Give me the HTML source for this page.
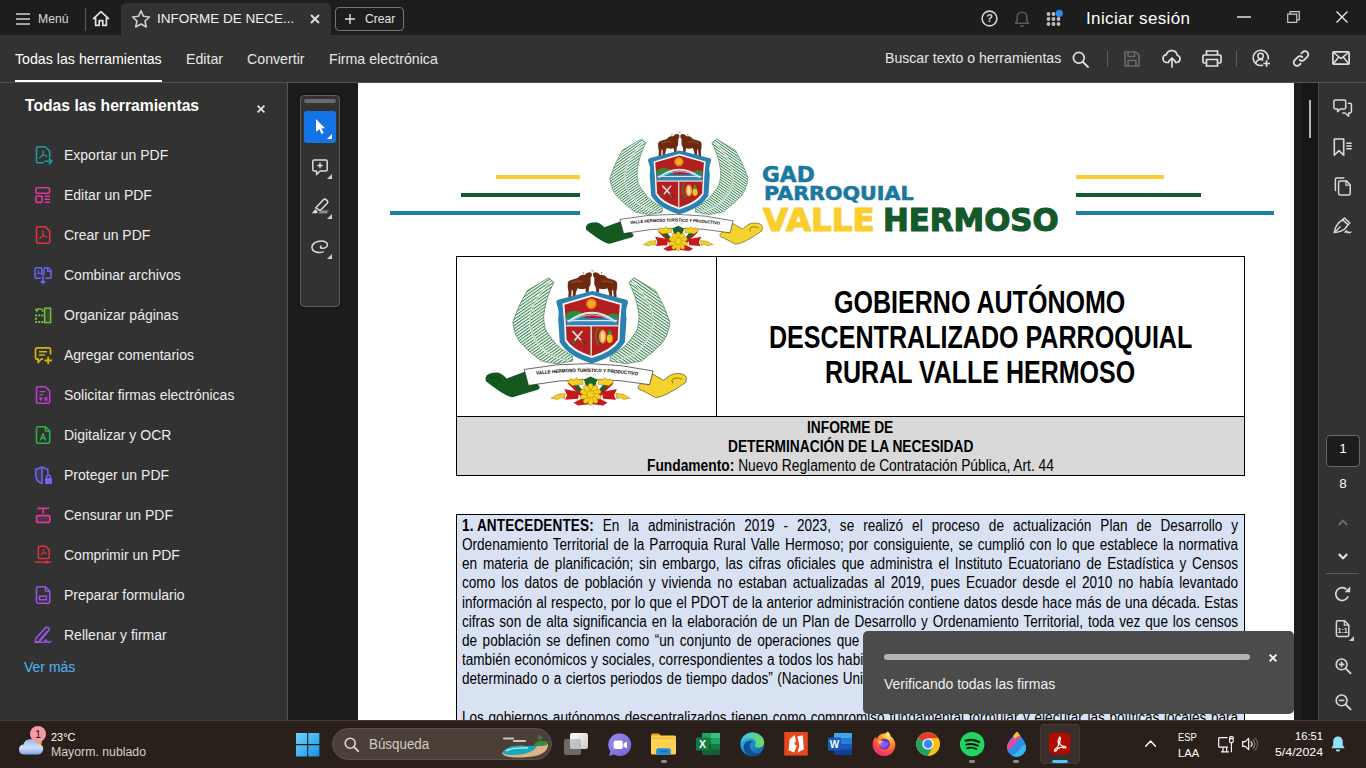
<!DOCTYPE html><html lang="es"><head>
<meta charset="utf-8">
<title>INFORME DE NECESIDAD</title>
<style>
*{box-sizing:border-box;margin:0;padding:0}
html,body{width:1366px;height:768px;overflow:hidden;background:#1d1d1d;font-family:"Liberation Sans",sans-serif;color:#e8e8e8}
.abs{position:absolute}
#titlebar{position:absolute;left:0;top:0;width:1366px;height:35px;background:#1d1d1d}
#tab{position:absolute;left:121px;top:3px;width:210px;height:32px;background:#323232;border-radius:5px 5px 0 0}
#toolbar{position:absolute;left:0;top:35px;width:1366px;height:48px;background:#323232;border-bottom:1px solid #525252}
#leftpanel{position:absolute;left:0;top:83px;width:288px;height:637px;background:#323232;border-right:1px solid #555}
#gutter{position:absolute;left:288px;top:83px;width:71px;height:637px;background:linear-gradient(90deg,#1c1c1c 0,#1c1c1c 70.400px,#fff 70.400px)}
#page{position:absolute;left:359px;top:83px;width:935px;height:637px;background:#fff;overflow:hidden;color:#000}
#scroll{position:absolute;left:1294px;top:83px;width:24px;height:637px;background:linear-gradient(90deg,#585858 0,#585858 0.3px,#1e1e1e 0.3px,#1e1e1e 7px,#171717 7px)}
#rail{position:absolute;left:1318px;top:83px;width:48px;height:637px;background:#323232;box-shadow:inset 1px 0 0 #4c4c4c}
#taskbar{position:absolute;left:0;top:720px;width:1366px;height:48px;background:#29201b;box-shadow:inset 0 1px 0 #453c37}
.t{position:absolute;white-space:nowrap;line-height:1}
svg{position:absolute;overflow:visible}
.jl{font-size:16px;color:#000;text-align:justify;text-align-last:justify;white-space:normal;transform-origin:0 0;transform:scaleX(0.848);height:16px;overflow:visible}

</style>
</head>
<body>
<div id="titlebar">
  <div id="tab"></div>
  <svg style="left:16px;top:13px" width="14" height="12" viewBox="0 0 14 12"><path d="M0 1h14M0 6h14M0 11h14" stroke="#d2d2d2" stroke-width="1.7" fill="none"></path></svg>
  <div class="t" id="menu" style="left:38px;top:12.7px;font-size:12.2px;color:#d8d8d8">Menú</div>
  <div class="abs" style="left:85px;top:8px;width:1px;height:23px;background:#5a5a5a"></div>
  <svg style="left:92px;top:10px" width="18" height="17" viewBox="0 0 18 17"><path d="M1.5 8.6 L9 1.6 L16.5 8.6 M3.6 7.4 V15.4 H7.2 V10.6 H10.8 V15.4 H14.4 V7.4" stroke="#e0e0e0" stroke-width="1.7" fill="none" stroke-linejoin="round" stroke-linecap="round"></path></svg>
  <svg style="left:131px;top:9px" width="20" height="20" viewBox="0 0 20 20"><path d="M10 1.8 L12.5 7.3 L18.5 8 L14 12.1 L15.3 18 L10 15 L4.7 18 L6 12.1 L1.5 8 L7.5 7.3 Z" stroke="#cfcfcf" stroke-width="1.6" fill="none" stroke-linejoin="round"></path></svg>
  <div class="t" id="tabtxt" style="left:157px;top:12.3px;font-size:13.5px;color:#f0f0f0">INFORME DE NECE...</div>
  <svg style="left:310px;top:14px" width="10" height="10" viewBox="0 0 10 10"><path d="M1 1L9 9M9 1L1 9" stroke="#dcdcdc" stroke-width="2" fill="none"></path></svg>
  <div class="abs" style="left:335px;top:7px;width:69px;height:24px;border:1px solid #757575;border-radius:4px"></div>
  <svg style="left:345px;top:14px" width="10" height="10" viewBox="0 0 10 10"><path d="M5 0V10M0 5H10" stroke="#e0e0e0" stroke-width="1.4" fill="none"></path></svg>
  <div class="t" id="crear" style="left:365px;top:12.9px;font-size:12.1px;color:#e4e4e4">Crear</div>
  <!-- help -->
  <svg style="left:981px;top:10px" width="17" height="17" viewBox="0 0 17 17"><circle cx="8.5" cy="8.5" r="7.4" stroke="#d4d4d4" stroke-width="1.6" fill="none"></circle><text x="8.5" y="12.4" text-anchor="middle" font-family="Liberation Sans,sans-serif" font-weight="bold" font-size="11" fill="#d4d4d4">?</text></svg>
  <!-- bell -->
  <svg style="left:1013px;top:10px" width="18" height="18" viewBox="0 0 18 18"><path d="M9 2.2c-3 0-4.8 2.2-4.8 5v3.2L2.6 13.2h12.8L13.8 10.4V7.2c0-2.800-1.800-5-4.800-5z" stroke="#5a5a5a" stroke-width="1.6" fill="none" stroke-linejoin="round"></path><path d="M7 15.200a2 2 0 0 0 4 0z" fill="#5a5a5a"></path></svg>
  <!-- apps -->
  <svg style="left:1046px;top:11px" width="16" height="16" viewBox="0 0 16 16"><g fill="#bdbdbd"><circle cx="2.500" cy="3" r="1.900"></circle><circle cx="7.500" cy="3" r="1.900"></circle><circle cx="2.500" cy="8" r="1.900"></circle><circle cx="7.500" cy="8" r="1.900"></circle><circle cx="12.500" cy="8" r="1.900"></circle><circle cx="2.500" cy="13" r="1.900"></circle><circle cx="7.500" cy="13" r="1.900"></circle><circle cx="12.500" cy="13" r="1.900"></circle></g><circle cx="13.300" cy="2.300" r="3.600" fill="#2d8cf0"></circle></svg>
  <div class="t" id="login" style="left:1086px;top:9.7px;font-size:17px;color:#ffffff;letter-spacing:0.37px">Iniciar sesión</div>
  <svg style="left:1237px;top:16px" width="14" height="2" viewBox="0 0 14 2"><path d="M0 1H14" stroke="#f0f0f0" stroke-width="1.400"></path></svg>
  <svg style="left:1287px;top:11px" width="13" height="12" viewBox="0 0 13 12"><path d="M0.700 3.200h9.100v8.100H0.700z M3 3V0.700h9.300v8.100H10" stroke="#c8c8c8" stroke-width="1.200" fill="none"></path></svg>
  <svg style="left:1336px;top:11px" width="12" height="12" viewBox="0 0 12 12"><path d="M0.500 0.500L11.500 11.500M11.500 0.500L0.500 11.500" stroke="#f0f0f0" stroke-width="1.300"></path></svg>
</div>
<div id="toolbar">
  <div class="t" id="tb1" style="left:15px;top:16.8px;font-size:14.2px;color:#ffffff">Todas las herramientas</div>
  <div class="abs" style="left:15px;top:45px;width:147px;height:2px;background:#ffffff"></div>
  <div class="t" id="tb2" style="left:186px;top:16.8px;font-size:14.2px;color:#e6e6e6">Editar</div>
  <div class="t" id="tb3" style="left:247px;top:16.8px;font-size:14.2px;color:#e6e6e6">Convertir</div>
  <div class="t" id="tb4" style="left:329px;top:16.8px;font-size:14.2px;color:#e6e6e6">Firma electrónica</div>
  <div class="t" id="tb5" style="left:885px;top:15.9px;font-size:14.1px;color:#e6e6e6">Buscar texto o herramientas</div>
  <svg style="left:1072px;top:16px" width="17" height="17" viewBox="0 0 17 17"><circle cx="6.800" cy="6.800" r="5.400" stroke="#e0e0e0" stroke-width="1.700" fill="none"></circle><path d="M10.800 10.800L16 16" stroke="#e0e0e0" stroke-width="1.900" stroke-linecap="round"></path></svg>
  <div class="abs" style="left:1107px;top:16px;width:1px;height:16px;background:#5c5c5c"></div>
  <!-- save -->
  <svg style="left:1124px;top:16px" width="16" height="16" viewBox="0 0 16 16"><path d="M1 1h11l3 3v11H1z" stroke="#6b6b6b" stroke-width="1.600" fill="none" stroke-linejoin="round"></path><path d="M4 1.500v4h6.500v-4M4 15v-5.500h8V15" stroke="#6b6b6b" stroke-width="1.500" fill="none"></path></svg>
  <!-- cloud upload -->
  <svg style="left:1162px;top:14px" width="20" height="19" viewBox="0 0 20 19"><path d="M6.500 13.500H5a4 4 0 0 1-.600-7.950A5.600 5.600 0 0 1 15.300 6.300 3.700 3.700 0 0 1 15 13.500h-1.500" stroke="#e0e0e0" stroke-width="1.700" fill="none" stroke-linecap="round" stroke-linejoin="round"></path><path d="M10 18V9.500M6.700 12.300L10 9l3.300 3.300" stroke="#e0e0e0" stroke-width="1.700" fill="none" stroke-linecap="round" stroke-linejoin="round"></path></svg>
  <!-- print -->
  <svg style="left:1202px;top:15px" width="20" height="17" viewBox="0 0 20 17"><path d="M4.500 5V1h11v4" stroke="#e0e0e0" stroke-width="1.700" fill="none"></path><path d="M4.500 13H2.300a1.300 1.300 0 0 1-1.300-1.300V6.300A1.300 1.300 0 0 1 2.300 5h15.400A1.300 1.300 0 0 1 19 6.300v5.400a1.300 1.300 0 0 1-1.300 1.300H15.500" stroke="#e0e0e0" stroke-width="1.700" fill="none"></path><path d="M4.500 9.500h11V16h-11z" stroke="#e0e0e0" stroke-width="1.700" fill="none"></path></svg>
  <div class="abs" style="left:1236px;top:16px;width:1px;height:16px;background:#5c5c5c"></div>
  <!-- person plus -->
  <svg style="left:1252px;top:14px" width="19" height="19" viewBox="0 0 19 19"><path d="M10.500 16.200A7.600 7.600 0 1 1 16.200 10" stroke="#e0e0e0" stroke-width="1.600" fill="none" stroke-linecap="round"></path><circle cx="8.600" cy="7" r="2.700" stroke="#e0e0e0" stroke-width="1.500" fill="none"></circle><path d="M3.800 14.300c.8-2.600 2.600-3.800 4.800-3.800 1 0 1.900.2 2.700.8" stroke="#e0e0e0" stroke-width="1.500" fill="none"></path><path d="M14.600 11.200v6.600M11.300 14.500h6.600" stroke="#e0e0e0" stroke-width="1.700" fill="none"></path></svg>
  <!-- link -->
  <svg style="left:1292px;top:15px" width="18" height="17" viewBox="0 0 18 17"><g stroke="#e0e0e0" stroke-width="1.800" fill="none" stroke-linecap="round"><path d="M7.600 9.800a3.300 3.300 0 0 0 4.700 0l3-3a3.300 3.300 0 0 0-4.700-4.700l-1.200 1.200"></path><path d="M10.400 7.200a3.300 3.300 0 0 0-4.700 0l-3 3a3.300 3.300 0 0 0 4.700 4.700l1.200-1.200"></path></g></svg>
  <!-- mail -->
  <svg style="left:1332px;top:16px" width="18" height="14" viewBox="0 0 18 14"><rect x="0.900" y="0.900" width="16.200" height="12.200" rx="1" stroke="#e0e0e0" stroke-width="1.700" fill="none"></rect><path d="M1.500 1.500L9 7.600 16.500 1.500M1.500 12.500L6.800 6M16.500 12.500L11.200 6" stroke="#e0e0e0" stroke-width="1.500" fill="none"></path></svg>
</div>
<div id="leftpanel">
  <div class="t" id="lptitle" style="left:25px;top:15px;font-size:15.700px;font-weight:bold;color:#ffffff">Todas las herramientas</div>
  <svg style="left:257px;top:22px" width="8" height="8" viewBox="0 0 8 8"><path d="M.6.600l6.800 6.800M7.400.600L.6 7.400" stroke="#e4e4e4" stroke-width="1.700"></path></svg>
  <svg style="left:34px;top:63px" width="18" height="18" viewBox="0 0 18 18"><path d="M9 16.800H4a1.500 1.500 0 0 1-1.500-1.500V2.300A1.500 1.500 0 0 1 4 .8h7.200L15.700 5.300V10.800" stroke="#1f9c9c" stroke-width="1.600" fill="none" stroke-linejoin="round" stroke-linecap="round"></path><path d="M9 4.3V8.7M9 8.7L5.6 11.7M9 8.7L12.8 10.1" stroke="#1f9c9c" stroke-width="1.3" fill="none" stroke-linecap="round"></path><path d="M10.800 15.200h6.600M15.200 12.600l2.700 2.600-2.700 2.600" stroke="#1f9c9c" stroke-width="1.600" fill="none" stroke-linecap="round" stroke-linejoin="round"></path></svg>
  <div class="t" id="li0" style="left:64px;top:65.15px;font-size:14px;color:#ececec">Exportar un PDF</div>
  <svg style="left:34px;top:103px" width="18" height="18" viewBox="0 0 18 18"><rect x="1.900" y="1.800" width="13.600" height="5.400" rx="1.200" stroke="#e0389a" stroke-width="1.600" fill="none"></rect><rect x="1.900" y="10" width="6.200" height="6.400" rx="1" stroke="#e0389a" stroke-width="1.600" fill="none"></rect><path d="M10.600 10.200h5.500M10.600 13.200h5.500M10.600 16.300h5.500" stroke="#e0389a" stroke-width="1.500"></path></svg>
  <div class="t" id="li1" style="left:64px;top:105.15px;font-size:14px;color:#ececec">Editar un PDF</div>
  <svg style="left:34px;top:143px" width="18" height="18" viewBox="0 0 18 18"><path d="M4.0 0.8H11.399999999999999L15.7 5.1V15.7a1.5 1.5 0 0 1-1.5 1.5H4.0a1.5 1.5 0 0 1-1.5-1.5V2.3a1.5 1.5 0 0 1 1.5-1.5z" stroke="#e0343f" stroke-width="1.6" fill="none" stroke-linejoin="round"></path><path d="M9 4.999999999999999V9.399999999999999M9 9.399999999999999L5.6 12.399999999999999M9 9.399999999999999L12.8 10.799999999999999" stroke="#e0343f" stroke-width="1.3" fill="none" stroke-linecap="round"></path></svg>
  <div class="t" id="li2" style="left:64px;top:145.15px;font-size:14px;color:#ececec">Crear un PDF</div>
  <svg style="left:34px;top:183px" width="18" height="18" viewBox="0 0 18 18"><path d="M6.800 12.300H2.300a1.300 1.300 0 0 1-1.300-1.300V3a1.300 1.300 0 0 1 1.300-1.300h4.200a1.300 1.300 0 0 1 1.300 1.300V9" stroke="#6c66f0" stroke-width="1.500" fill="none"></path><path d="M11.200 12.300h4.600a1.300 1.300 0 0 0 1.300-1.300V4.800L14 1.700h-2.700a1.300 1.300 0 0 0-1.300 1.300V9" stroke="#6c66f0" stroke-width="1.500" fill="none"></path><path d="M13.600 2v3.400h3.200" stroke="#6c66f0" stroke-width="1.200" fill="none"></path><path d="M4.5 4.279999999999999V6.92M4.5 6.92L2.46 8.719999999999999M4.5 6.92L6.779999999999999 7.76" stroke="#6c66f0" stroke-width="1.0" fill="none" stroke-linecap="round"></path><path d="M9 9.500v7" stroke="#6c66f0" stroke-width="1.600"></path><path d="M5.800 15l3.200 3.400L12.200 15z" fill="#6c66f0"></path></svg>
  <div class="t" id="li3" style="left:64px;top:185.15px;font-size:14px;color:#ececec">Combinar archivos</div>
  <svg style="left:34px;top:223px" width="18" height="18" viewBox="0 0 18 18"><rect x="10.600" y="2.200" width="6" height="14.400" stroke="#72c043" stroke-width="1.500" fill="#3d4a2c"></rect><g fill="#72c043"><rect x="1" y="8.400" width="2" height="2"></rect><rect x="4.200" y="8.400" width="2" height="2"></rect><rect x="7.300" y="8.400" width="2" height="2"></rect><rect x="1" y="11.700" width="2" height="2"></rect><rect x="1" y="15" width="2" height="2"></rect><rect x="4.200" y="15" width="2" height="2"></rect><rect x="7.300" y="15" width="2" height="2"></rect></g><path d="M8.800 5.800c0-2.400-2.600-3.800-5.400-2.600" stroke="#72c043" stroke-width="1.600" fill="none"></path><path d="M0.600 2.800l4 .2-1.700 3.800z" fill="#72c043"></path></svg>
  <div class="t" id="li4" style="left:64px;top:225.15px;font-size:14px;color:#ececec">Organizar páginas</div>
  <svg style="left:34px;top:263px" width="18" height="18" viewBox="0 0 18 18"><path d="M9 13.200H7l-2.800 3.300v-3.300H3.300a1.800 1.800 0 0 1-1.800-1.800V3.600a1.800 1.800 0 0 1 1.800-1.800h11.400a1.800 1.800 0 0 1 1.800 1.800V8.500" stroke="#dcb400" stroke-width="1.700" fill="none" stroke-linejoin="round"></path><path d="M5 5.700h8M5 9h6" stroke="#dcb400" stroke-width="1.600"></path><path d="M14.200 10.800v7.400M10.500 14.500h7.400" stroke="#dcb400" stroke-width="1.800"></path></svg>
  <div class="t" id="li5" style="left:64px;top:265.15px;font-size:14px;color:#ececec">Agregar comentarios</div>
  <svg style="left:34px;top:303px" width="18" height="18" viewBox="0 0 18 18"><path d="M4.0 0.8H11.399999999999999L15.7 5.1V15.7a1.5 1.5 0 0 1-1.5 1.5H4.0a1.5 1.5 0 0 1-1.5-1.5V2.3a1.5 1.5 0 0 1 1.5-1.5z" stroke="#c03ccc" stroke-width="1.6" fill="none" stroke-linejoin="round"></path><path d="M5.500 5.600h6M5.500 8.600h3.800" stroke="#c03ccc" stroke-width="1.400"></path><path d="M5.400 11.200h2.800v2.300l-1.400 1.700-1.400-1.700z" fill="#c03ccc"></path><path d="M10.300 11.300l3.200 3.400M13.500 11.300l-3.200 3.400" stroke="#c03ccc" stroke-width="1.500"></path></svg>
  <div class="t" id="li6" style="left:64px;top:305.15px;font-size:14px;color:#ececec">Solicitar firmas electrónicas</div>
  <svg style="left:34px;top:343px" width="18" height="18" viewBox="0 0 18 18"><path d="M4.0 0.8H11.399999999999999L15.7 5.1V15.7a1.5 1.5 0 0 1-1.5 1.5H4.0a1.5 1.5 0 0 1-1.5-1.5V2.3a1.5 1.5 0 0 1 1.5-1.5z" stroke="#2fb04c" stroke-width="1.6" fill="none" stroke-linejoin="round"></path><path d="M11.399999999999999 0.8V5.1H15.7" stroke="#2fb04c" stroke-width="1.36" fill="none" stroke-linejoin="round"></path><path d="M6.200 14.400L9 7.800l2.800 6.600M7.200 12.200h3.600" stroke="#2fb04c" stroke-width="1.400" fill="none" stroke-linejoin="round"></path></svg>
  <div class="t" id="li7" style="left:64px;top:345.15px;font-size:14px;color:#ececec">Digitalizar y OCR</div>
  <svg style="left:34px;top:383px" width="18" height="18" viewBox="0 0 18 18"><path d="M8 .9L1.800 3.400v5.800c0 4 2.700 6.900 6.200 8.300V.9z" stroke="#6c66f0" stroke-width="1.600" fill="#3a3a55" stroke-linejoin="round"></path><path d="M8 .9l5.800 2.500v5" stroke="#6c66f0" stroke-width="1.600" fill="none" stroke-linejoin="round"></path><rect x="11" y="12" width="7" height="6" rx=".8" fill="#6c66f0"></rect><path d="M12.600 12.200v-1.400a1.900 1.900 0 0 1 3.800 0v1.400" stroke="#6c66f0" stroke-width="1.500" fill="none"></path></svg>
  <div class="t" id="li8" style="left:64px;top:385.15px;font-size:14px;color:#ececec">Proteger un PDF</div>
  <svg style="left:34px;top:423px" width="18" height="18" viewBox="0 0 18 18"><path d="M3.400 2.300h11.600M9.200 2.300v5.400" stroke="#e0389a" stroke-width="1.700"></path><rect x="2.600" y="9.600" width="13.200" height="6.800" rx="1.200" stroke="#e0389a" stroke-width="1.700" fill="#4a3344"></rect></svg>
  <div class="t" id="li9" style="left:64px;top:425.15px;font-size:14px;color:#ececec">Censurar un PDF</div>
  <svg style="left:34px;top:463px" width="18" height="18" viewBox="0 0 18 18"><path d="M5.8 0.3H11.6L15.2 3.9V11.1a1.5 1.5 0 0 1-1.5 1.5H5.8a1.5 1.5 0 0 1-1.5-1.5V1.8a1.5 1.5 0 0 1 1.5-1.5z" stroke="#e0343f" stroke-width="1.5" fill="none" stroke-linejoin="round"></path><path d="M9.7 3.1499999999999995V6.45M9.7 6.45L7.1499999999999995 8.7M9.7 6.45L12.549999999999999 7.5" stroke="#e0343f" stroke-width="1.2" fill="none" stroke-linecap="round"></path><path d="M1 16.100h16" stroke="#e0343f" stroke-width="1.500"></path><circle cx="12.700" cy="16.100" r="1.700" fill="#e0343f"></circle></svg>
  <div class="t" id="li10" style="left:64px;top:465.15px;font-size:14px;color:#ececec">Comprimir un PDF</div>
  <svg style="left:34px;top:503px" width="18" height="18" viewBox="0 0 18 18"><path d="M4.0 0.8H11.399999999999999L15.7 5.1V15.7a1.5 1.5 0 0 1-1.5 1.5H4.0a1.5 1.5 0 0 1-1.5-1.5V2.3a1.5 1.5 0 0 1 1.5-1.5z" stroke="#9a55e0" stroke-width="1.6" fill="none" stroke-linejoin="round"></path><path d="M11.399999999999999 0.8V5.1H15.7" stroke="#9a55e0" stroke-width="1.36" fill="none" stroke-linejoin="round"></path><rect x="5.600" y="10.200" width="6.800" height="3.600" stroke="#9a55e0" stroke-width="1.500" fill="none"></rect></svg>
  <div class="t" id="li11" style="left:64px;top:505.15px;font-size:14px;color:#ececec">Preparar formulario</div>
  <svg style="left:34px;top:543px" width="18" height="18" viewBox="0 0 18 18"><path d="M1.300 16.300l.5-3.800L11.400 1.900a2.100 2.100 0 0 1 3.100 2.900L5.600 15.600z" stroke="#9a55e0" stroke-width="1.600" fill="none" stroke-linejoin="round"></path><path d="M5 14.600L13.200 5" stroke="#9a55e0" stroke-width="1.200"></path><path d="M1.300 16.300H9.500c1.200-2 2.300-3 2.600-2.500.4.700-1.200 2.600-.6 2.800.7.200 1.600-1.600 2.300-1.400.6.200 0 1.400.8 1.400.7 0 1.400-.6 2.400-1.300" stroke="#9a55e0" stroke-width="1.300" fill="none" stroke-linecap="round"></path></svg>
  <div class="t" id="li12" style="left:64px;top:545.15px;font-size:14px;color:#ececec">Rellenar y firmar</div>
  <div class="t" id="vermas" style="left:24px;top:577.200px;font-size:14px;color:#4fb5f2">Ver más</div>
</div>
<div id="gutter">
  <div class="abs" style="left:12px;top:12px;width:40px;height:212px;background:#323232;border:1px solid #5e5e5e;border-radius:4px;box-shadow:0 0 3px rgba(0,0,0,.6)"></div>
  <div class="abs" style="left:16px;top:16px;width:32px;height:4px;background:#6b6b6b;border-radius:2px"></div>
  <div class="abs" style="left:16px;top:28px;width:32px;height:32px;background:#1473e6;border-radius:3px"></div>
  <svg style="left:28px;top:36px" width="10" height="15" viewBox="0 0 10 15"><path d="M0 0L9 9.300H5.400L7.600 14L5.500 14.900L3.400 10.200L0 12.800Z" fill="#fff"></path></svg>
  <svg style="left:39px;top:51px" width="5" height="5" viewBox="0 0 5 5"><path d="M5 0V5H0Z" fill="#fff"></path></svg>
  <!-- comment -->
  <svg style="left:24px;top:76px" width="16" height="17" viewBox="0 0 16 17"><path d="M2.300 .9h11.400a1.500 1.500 0 0 1 1.500 1.500v8a1.500 1.500 0 0 1-1.500 1.500H8.200L4.600 15.600V11.900H2.300A1.500 1.500 0 0 1 .8 10.400v-8A1.500 1.500 0 0 1 2.300 .9z" stroke="#dcdcdc" stroke-width="1.500" fill="none" stroke-linejoin="round"></path><path d="M8 3.600v5.600M5.200 6.400h5.600" stroke="#dcdcdc" stroke-width="1.500"></path></svg>
  <svg style="left:39px;top:91px" width="5" height="5" viewBox="0 0 5 5"><path d="M5 0V5H0Z" fill="#d0d0d0"></path></svg>
  <!-- highlighter -->
  <svg style="left:23px;top:115px" width="19" height="16" viewBox="0 0 19 16"><path d="M4.800 9.800L12.600 1.600a1.700 1.700 0 0 1 2.400 0l1.300 1.300a1.700 1.700 0 0 1 0 2.400L9.200 12.600z" stroke="#dcdcdc" stroke-width="1.500" fill="none" stroke-linejoin="round"></path><path d="M4.300 11.200l2.600 2.600-1.400 1.400H.8z" fill="#dcdcdc"></path><path d="M9.500 12.600h8.300l-2.200 3H7.300z" fill="#8a8a8a"></path></svg>
  <svg style="left:39px;top:131px" width="5" height="5" viewBox="0 0 5 5"><path d="M5 0V5H0Z" fill="#d0d0d0"></path></svg>
  <!-- lasso -->
  <svg style="left:23px;top:157px" width="18" height="14" viewBox="0 0 18 14"><path d="M12.200 11.900C8 13.400 1.300 12.300 1 7.600.7 3.200 6 1 10.300 1c3.400 0 6.400 1.400 6.200 4-.2 2.300-3.300 3.600-5.600 3.300-1.500-.2-2-1.500-.9-2.300" stroke="#dcdcdc" stroke-width="1.500" fill="none" stroke-linecap="round"></path></svg>
  <svg style="left:39px;top:171px" width="5" height="5" viewBox="0 0 5 5"><path d="M5 0V5H0Z" fill="#d0d0d0"></path></svg>
</div>
<div id="page">
<svg width="0" height="0" style="position:absolute">
<defs>
  <pattern id="hatch" width="13" height="13" patternUnits="userSpaceOnUse" patternTransform="rotate(-35)"><rect width="13" height="13" fill="#fbfdfb"></rect><rect width="13" height="5.400" fill="#34804c"></rect></pattern>
  <pattern id="hatch2" width="13" height="13" patternUnits="userSpaceOnUse" patternTransform="rotate(35)"><rect width="13" height="13" fill="#fbfdfb"></rect><rect width="13" height="5.400" fill="#34804c"></rect></pattern>
  <path id="ribbonpath" d="M288 577 Q560 546 812 581"></path>
  <symbol id="crest" viewBox="0 0 1126 768">
    <!-- wreaths -->
    <path d="M351 81 L241 147 Q195 225 168 307 Q175 374 208 414 Q255 465 314 507 L394 521 L474 507 L474 481 Q420 450 394 427 Q340 360 334 341 Q322 290 328 261 Q335 210 348 174 Q360 140 378 104 Z" fill="url(#hatch)" stroke="#3f7f52" stroke-width="3.500" stroke-linejoin="round"></path><path d="M361 101 Q262 200 255 300 Q258 400 348 467 Q400 495 448 501" stroke="#ffffff" stroke-width="9" fill="none"></path><path d="M361 101 Q262 200 255 300 Q258 400 348 467 Q400 495 448 501" stroke="#3f7f52" stroke-width="3" fill="none"></path>
    <path d="M 789 81 L 899 147 Q 945 225 972 307 Q 965 374 932 414 Q 885 465 826 507 L 746 521 L 666 507 L 666 481 Q 720 450 746 427 Q 800 360 806 341 Q 818 290 812 261 Q 805 210 792 174 Q 780 140 762 104 Z" fill="url(#hatch2)" stroke="#3f7f52" stroke-width="3.500" stroke-linejoin="round"></path><path d="M 779 101 Q 878 200 885 300 Q 882 400 792 467 Q 740 495 692 501" stroke="#ffffff" stroke-width="9" fill="none"></path><path d="M 779 101 Q 878 200 885 300 Q 882 400 792 467 Q 740 495 692 501" stroke="#3f7f52" stroke-width="3" fill="none"></path>
    <!-- bulls -->
    <g fill="#6e2a10">
      <path d="M449 108 Q450 96 466 92 L500 82 Q510 66 522 66 L536 66 Q546 52 560 52 Q572 52 573 62 Q574 74 566 82 L566 96 Q568 120 558 130 L556 156 L542 158 L540 136 Q520 142 500 134 Q490 150 488 182 L474 182 L476 150 L470 140 L466 182 L452 180 Q456 150 449 130 Z"></path>
      <path d="M 702 108 Q 701 96 685 92 L 651 82 Q 641 66 629 66 L 615 66 Q 605 52 591 52 Q 579 52 578 62 Q 577 74 585 82 L 585 96 Q 583 120 593 130 L 595 156 L 609 158 L 611 136 Q 631 142 651 134 Q 661 150 663 182 L 677 182 L 675 150 L 681 140 L 685 182 L 699 180 Q 695 150 702 130 Z"></path>
    </g>
    <path d="M529 50 V64 M622 50 V64 M569 40 L575.500 48 L582 40" stroke="#3a2a20" stroke-width="2.500" fill="none"></path>
    <path d="M470 106 Q500 92 524 100 M681 106 Q651 92 627 100" stroke="#8a4524" stroke-width="8" fill="none" stroke-linecap="round"></path>
    <!-- shield -->
    <path d="M575 148 L745 192 Q762 196 756 214 Q742 250 750 290 L742 410 Q700 482 572 520 Q448 482 408 410 L400 290 Q408 250 392 214 Q386 196 404 192 Z" fill="#2a82b2"></path>
    <path d="M573 168 L726 212 Q716 300 714 402 Q682 458 572 492 Q464 458 434 402 Q432 300 422 212 Z" fill="#f4f4f4"></path>
    <path d="M573 178 L716 219 Q708 300 705 398 Q674 448 572 481 Q472 448 443 398 Q440 300 432 219 Z" fill="#b31f1e"></path>
    <!-- sun -->
    <circle cx="570" cy="214" r="25" fill="#f08c1c" stroke="#f0a02a" stroke-width="5" stroke-dasharray="5 4"></circle><circle cx="570" cy="214" r="15" fill="#f6b21e"></circle>
    <!-- hills / river / bridge -->
    <path d="M438 270 Q474 234 524 262 L544 294 L440 300 Z" fill="#2f8a44"></path>
    <path d="M636 282 Q680 254 708 270 L706 300 L636 300 Z" fill="#2f8a44"></path>
    <path d="M441 288 L706 288 L705 322 L442 322 Z" fill="#2f86c4"></path>
    <path d="M452 306 Q572 214 694 306" stroke="#e4e8ea" stroke-width="10" fill="none"></path>
    <path d="M468 300 Q572 240 678 300" stroke="#9fd0e8" stroke-width="5" fill="none"></path>
    <path d="M446 300 H702" stroke="#dfe3e5" stroke-width="6"></path>
    <path d="M441 326 H706" stroke="#d4d4d4" stroke-width="8"></path>
    <path d="M569 326 V480" stroke="#d4d4d4" stroke-width="8"></path>
    <!-- machetes -->
    <path d="M476 356 L528 412 M522 356 L474 414" stroke="#dcdcdc" stroke-width="9" stroke-linecap="round"></path>
    <path d="M520 402 L536 418 M482 404 L468 420" stroke="#4a2f1c" stroke-width="8" stroke-linecap="round"></path>
    <!-- fruit -->
    <path d="M604 338 Q578 380 608 426" stroke="#2f8a3e" stroke-width="10" fill="none" stroke-dasharray="8 3"></path>
    <ellipse cx="628" cy="382" rx="19" ry="35" fill="#ef9a30"></ellipse><ellipse cx="628" cy="382" rx="10" ry="25" fill="#f8dca6"></ellipse>
    <ellipse cx="664" cy="392" rx="15" ry="22" fill="#f0c419"></ellipse><path d="M652 372 L664 344 L676 372 Z" fill="#3f9a4a"></path>
    <!-- ribbon ends -->
    <path d="M28 592 Q36 566 88 566 Q110 568 136 596 L232 560 L304 636 Q312 652 282 658 L168 692 Q134 692 30 610 Z" fill="#14591f"></path>
    <path d="M50 596 Q70 584 96 590 Q112 600 100 616" stroke="#0c3a14" stroke-width="3" fill="none"></path>
    <path d="M1056 592 Q1048 566 996 572 Q974 574 940 606 L878 570 L810 636 Q802 652 832 658 L898 694 Q940 696 1054 616 Z" fill="#f6d22c" stroke="#3a3210" stroke-width="3"></path>
    <path d="M1034 600 Q1014 588 990 596 Q976 606 988 622" stroke="#3a3210" stroke-width="3" fill="none"></path>
    <!-- ribbon band -->
    <path d="M226 550 Q560 486 886 558 L868 628 Q560 572 248 632 Z" fill="#fdfdfd" stroke="#222" stroke-width="3.500"></path>
    <text font-family="Liberation Sans,sans-serif" font-weight="bold" font-size="25" fill="#000" textLength="521" lengthAdjust="spacingAndGlyphs"><textPath href="#ribbonpath">VALLE HERMOSO TURÍSTICO Y PRODUCTIVO</textPath></text>
    <!-- flowers -->
    <g fill="#c61a1a">
      <path d="M449 622 L472 610 L542 668 L520 692 Z"></path><path d="M 683 622 L 660 610 L 590 668 L 612 692 Z"></path>
      <path d="M431 650 L508 666 L502 700 L436 705 L446 682 Z"></path><path d="M 701 650 L 624 666 L 630 700 L 696 705 L 686 682 Z"></path>
      <path d="M542 688 L479 720 L502 734 L558 728 Z"></path><path d="M 590 688 L 653 720 L 630 734 L 574 728 Z"></path>
    </g>
    <g fill="#17642c"><path d="M481 632 L500 624 L523 656 L506 664 Z"></path><path d="M 651 632 L 632 624 L 609 656 L 626 664 Z"></path><path d="M532 602 L566 586 L600 602 L590 636 L542 636 Z"></path></g>
    <g fill="#f3cf1e" stroke="#7a5f00" stroke-width="2">
      <path d="M447 614 L462 598 L478 604 L496 592 L506 604 L524 598 L528 626 L472 634 Z"></path><path d="M 685 614 L 670 598 L 654 604 L 636 592 L 626 604 L 608 598 L 604 626 L 660 634 Z"></path>
      <path d="M363 697 L398 677 L436 673 L432 701 L414 694 L398 704 Z"></path><path d="M 769 697 L 734 677 L 696 673 L 700 701 L 718 694 L 734 704 Z"></path>
    </g>
    <path d="M540 574 q10 -6 14 6 M592 574 q-10 -6 -14 6" stroke="#e9c51c" stroke-width="4" fill="none"></path>
    <g fill="#f6d120" stroke="#8a6d00" stroke-width="1.800"><ellipse cx="566" cy="643" rx="13" ry="22" transform="rotate(0 566 677)"></ellipse><ellipse cx="566" cy="643" rx="13" ry="22" transform="rotate(36 566 677)"></ellipse><ellipse cx="566" cy="643" rx="13" ry="22" transform="rotate(72 566 677)"></ellipse><ellipse cx="566" cy="643" rx="13" ry="22" transform="rotate(108 566 677)"></ellipse><ellipse cx="566" cy="643" rx="13" ry="22" transform="rotate(144 566 677)"></ellipse><ellipse cx="566" cy="643" rx="13" ry="22" transform="rotate(180 566 677)"></ellipse><ellipse cx="566" cy="643" rx="13" ry="22" transform="rotate(216 566 677)"></ellipse><ellipse cx="566" cy="643" rx="13" ry="22" transform="rotate(252 566 677)"></ellipse><ellipse cx="566" cy="643" rx="13" ry="22" transform="rotate(288 566 677)"></ellipse><ellipse cx="566" cy="643" rx="13" ry="22" transform="rotate(324 566 677)"></ellipse><circle cx="566" cy="677" r="19"></circle></g>
  </symbol>
</defs>
</svg>

<div class="abs" style="left:137px;top:92.1px;width:84px;height:3.5px;background:#f7cd2e"></div>
<div class="abs" style="left:101.5px;top:110px;width:119.5px;height:4.1px;background:#14592a"></div>
<div class="abs" style="left:31px;top:127.7px;width:190px;height:4.1px;background:#1a7fa3"></div>
<div class="abs" style="left:717px;top:92.1px;width:88.4px;height:3.5px;background:#f7cd2e"></div>
<div class="abs" style="left:717px;top:110px;width:125px;height:4.1px;background:#14592a"></div>
<div class="abs" style="left:717px;top:127.7px;width:197.9px;height:4.1px;background:#1a7fa3"></div>
<svg style="left:221.7px;top:42.0px" width="193.4" height="131.9"><use href="#crest"></use></svg>
<svg style="left:402.7px;top:78.4px" width="54.7" height="27.6"><text id="gad1" x="0" y="21.2" font-family="DejaVu Sans,sans-serif" font-weight="bold" font-size="21.2" fill="#1b78a0" textLength="52.7" lengthAdjust="spacingAndGlyphs" stroke="#1b78a0" stroke-width="0.6">GAD</text></svg>
<svg style="left:405.3px;top:98.4px" width="151.7" height="25.1"><text id="gad2" x="0" y="19.3" font-family="DejaVu Sans,sans-serif" font-weight="bold" font-size="19.3" fill="#1b78a0" textLength="149.7" lengthAdjust="spacingAndGlyphs" stroke="#1b78a0" stroke-width="0.6">PARROQUIAL</text></svg>
<svg style="left:403.9px;top:116.9px" width="113.7" height="40.6"><text id="gad3" x="0" y="31.2" font-family="DejaVu Sans,sans-serif" font-weight="bold" font-size="31.2" fill="#f9ce2d" textLength="111.7" lengthAdjust="spacingAndGlyphs" stroke="#f9ce2d" stroke-width="1.2">VALLE</text></svg>
<svg style="left:524px;top:116.9px" width="177.7" height="40.6"><text id="gad4" x="0" y="31.2" font-family="DejaVu Sans,sans-serif" font-weight="bold" font-size="31.2" fill="#14592a" textLength="175.7" lengthAdjust="spacingAndGlyphs" stroke="#14592a" stroke-width="1.2">HERMOSO</text></svg>
<div class="abs" style="left:96.6px;top:172.7px;width:788.9999999999999px;height:220.3px;border:1.2px solid #000"></div>
<div class="abs" style="left:97.6px;top:333.5px;width:787.0px;height:58.5px;background:#d9d9d9"></div>
<div class="abs" style="left:96.6px;top:332.5px;width:789.0px;height:1.2px;background:#000"></div>
<div class="abs" style="left:356.9px;top:172.7px;width:1.2px;height:160.7px;background:#000"></div>
<svg style="left:121px;top:179px" width="220" height="150.060"><use href="#crest"></use></svg>
<div class="abs" style="left:97.2px;top:430.6px;width:788.8px;height:208.4px;background:#d9e2f3"></div>
<div class="abs" style="left:97.2px;top:430.6px;width:788.8px;height:1.4px;background:#000"></div>
<div class="abs" style="left:97.2px;top:430.6px;width:1.3px;height:208.4px;background:#000"></div>
<div class="abs" style="left:884.7px;top:430.6px;width:1.3px;height:208.4px;background:#000"></div>
<div class="t" id="t1" style="left: 475.2px; top: 203.98px; font-size: 30.5px; font-weight: bold; color: rgb(0, 0, 0); transform: scaleX(0.8213); transform-origin: 0px 0px;">GOBIERNO AUTÓNOMO</div>
<div class="t" id="t2" style="left: 409.5px; top: 239.28px; font-size: 30.5px; font-weight: bold; color: rgb(0, 0, 0); transform: scaleX(0.8227); transform-origin: 0px 0px;">DESCENTRALIZADO PARROQUIAL</div>
<div class="t" id="t3" style="left: 465.8px; top: 273.98px; font-size: 30.5px; font-weight: bold; color: rgb(0, 0, 0); transform: scaleX(0.8194); transform-origin: 0px 0px;">RURAL VALLE HERMOSO</div>
<div class="t" id="g1" style="left: 448.2px; top: 336.56px; font-size: 16px; font-weight: bold; color: rgb(0, 0, 0); transform: scaleX(0.8591); transform-origin: 0px 0px;">INFORME DE</div>
<div class="t" id="g2" style="left: 368.6px; top: 355.96px; font-size: 16px; font-weight: bold; color: rgb(0, 0, 0); transform: scaleX(0.8591); transform-origin: 0px 0px;">DETERMINACIÓN DE LA NECESIDAD</div>
<div class="t" id="g3" style="left: 287.7px; top: 375.26px; font-size: 16px; color: rgb(0, 0, 0); transform: scaleX(0.8617); transform-origin: 0px 0px;"><b>Fundamento:</b> Nuevo Reglamento de Contratación Pública, Art. 44</div>
<div class="t jl" id="p1" style="left:103.4px;top:434.76px;width:915.21px"><b style="display:inline-block;letter-spacing:.14px">1. ANTECEDENTES:</b> En la administración 2019 - 2023, se realizó el proceso de actualización Plan de Desarrollo y</div>
<div class="t jl" id="p2" style="left:103.4px;top:453.96px;width:915.21px">Ordenamiento Territorial de la Parroquia Rural Valle Hermoso; por consiguiente, se cumplió con lo que establece la normativa</div>
<div class="t jl" id="p3" style="left:103.4px;top:473.16px;width:915.21px">en materia de planificación; sin embargo, las cifras oficiales que administra el Instituto Ecuatoriano de Estadística y Censos</div>
<div class="t jl" id="p4" style="left:103.4px;top:492.36px;width:915.21px">como los datos de población y vivienda no estaban actualizadas al 2019, pues Ecuador desde el 2010 no había levantado</div>
<div class="t jl" id="p5" style="left:103.4px;top:511.56px;width:915.21px">información al respecto, por lo que el PDOT de la anterior administración contiene datos desde hace más de una década. Estas</div>
<div class="t jl" id="p6" style="left:103.4px;top:530.76px;width:915.21px">cifras son de alta significancia en la elaboración de un Plan de Desarrollo y Ordenamiento Territorial, toda vez que los censos</div>
<div class="t jl" id="p7" style="left:103.4px;top:549.96px;width:468.51px">de población se definen como “un conjunto de operaciones que</div>
<div class="t jl" id="p8" style="left:103.4px;top:569.16px;width:473.11px">también económicos y sociales, correspondientes a todos los habi</div>
<div class="t jl" id="p9" style="left:103.4px;top:588.36px;width:472.88px">determinado o a ciertos periodos de tiempo dados” (Naciones Uni</div>
<div class="t jl" id="h7" style="left:505px;top:549.96px;width:441.63px"> consisten en recoger, recopilar, evaluar, analizar y divulgar datos demográficos y</div>
<div class="t jl" id="h8" style="left:505px;top:569.16px;width:441.63px">tantes de un país o de una parte bien delimitada del mismo, en un momento</div>
<div class="t jl" id="h9" style="left:505px;top:588.36px;width:77.83px;text-align-last:left">das, 2010).</div>
<div class="t jl" id="p10" style="left:103.4px;top:627.06px;width:915.21px">Los gobiernos autónomos descentralizados tienen como compromiso fundamental formular y ejecutar las políticas locales para</div>
<div class="abs" style="left:504.4px;top:548.0px;width:430.6px;height:82.79999999999995px;background:#4b4b4b;border-radius:5px"></div>
<div class="abs" style="left:525px;top:571px;width:365.5px;height:6.400px;background:#b3b3b3;border-radius:3.200px"></div>
<svg style="left:909.6px;top:570.6px" width="8" height="8" viewBox="0 0 8 8"><path d="M.6.600l6.800 6.800M7.400.600L.6 7.400" stroke="#fff" stroke-width="1.700"></path></svg>
<div class="t" id="toast" style="left:525px;top:594.15px;font-size:14px;color:#f0f0f0;font-family:'Liberation Sans',sans-serif">Verificando todas las firmas</div>
</div>
<div id="scroll">
  <div class="abs" style="left:15px;top:17px;width:2px;height:38px;background:#b4b4b4"></div>
</div>
<div id="rail">
  <!-- comments -->
  <svg style="left:15px;top:16px" width="20" height="19" viewBox="0 0 20 19"><path d="M2.300 .9h9a1.400 1.400 0 0 1 1.400 1.400v6.200a1.400 1.400 0 0 1-1.400 1.400H7.600L4.600 12.600V9.900H2.300A1.400 1.400 0 0 1 .9 8.500V2.300A1.400 1.400 0 0 1 2.300 .9z" stroke="#dadada" stroke-width="1.500" fill="none" stroke-linejoin="round"></path><path d="M15.400 4.200h1.600a1.400 1.400 0 0 1 1.400 1.400v7a1.400 1.400 0 0 1-1.400 1.400h-1.400v3.200l-3.600-3.200H9.800" stroke="#dadada" stroke-width="1.500" fill="none" stroke-linejoin="round" stroke-linecap="round"></path></svg>
  <!-- bookmark -->
  <svg style="left:15px;top:55px" width="20" height="19" viewBox="0 0 20 19"><path d="M1.300 1h9.400v16.300L6 12.600 1.300 17.300z" stroke="#dadada" stroke-width="1.600" fill="none" stroke-linejoin="round"></path><path d="M13.300 5.300h5.400M13.300 8h5.400M13.300 10.700h5.400" stroke="#dadada" stroke-width="1.400"></path></svg>
  <!-- copy -->
  <svg style="left:15.500px;top:94px" width="18" height="19" viewBox="0 0 18 19"><path d="M6 3.900h6.400l3.800 3.800v8.800a1.400 1.400 0 0 1-1.400 1.400H6a1.400 1.400 0 0 1-1.400-1.400V5.300A1.400 1.400 0 0 1 6 3.900z" stroke="#dadada" stroke-width="1.500" fill="none" stroke-linejoin="round"></path><path d="M12 4.200v3.900h3.900" stroke="#dadada" stroke-width="1.300" fill="none"></path><path d="M1.400 13.500V2.300A1.400 1.400 0 0 1 2.800 .9h7" stroke="#dadada" stroke-width="1.500" fill="none" stroke-linecap="round"></path></svg>
  <!-- sign pen -->
  <svg style="left:14.700px;top:134px" width="20" height="18" viewBox="0 0 20 18"><path d="M1.200 15.600c.6-3.600 2-7 4.400-9.800l4-3.200 5.400 5.200-3.300 4.200c-2.800 2.300-6.300 3.300-10.500 3.600z" stroke="#dadada" stroke-width="1.500" fill="none" stroke-linejoin="round"></path><path d="M9.600 2.600l2-1.600 5.200 5-1.800 1.800" stroke="#dadada" stroke-width="1.500" fill="none" stroke-linejoin="round"></path><path d="M1.600 15.200l6-5.600" stroke="#dadada" stroke-width="1.300"></path><path d="M11.800 15.400c1-1.200 1.800-1.800 2.100-1.500.4.500-.6 1.600 0 1.800.6.100 1-.9 1.600-.8.500.1.100.9.700.9.500 0 1.100-.4 1.800-.9" stroke="#dadada" stroke-width="1.200" fill="none" stroke-linecap="round"></path></svg>
  <!-- page box -->
  <div class="abs" style="left:8px;top:352px;width:34px;height:32px;background:#1d1d1d;border:1px solid #686868;border-radius:4px"></div>
  <div class="t" id="pg1" style="left:8px;top:359.200px;width:34px;text-align:center;font-size:13.500px;color:#fff">1</div>
  <div class="t" id="pg8" style="left:8px;top:393.600px;width:34px;text-align:center;font-size:13.500px;color:#fff">8</div>
  <svg style="left:20px;top:435.500px" width="10" height="7" viewBox="0 0 10 7"><path d="M.8 6L5 1.600 9.200 6" stroke="#6c6c6c" stroke-width="2" fill="none"></path></svg>
  <svg style="left:20px;top:470px" width="10" height="7" viewBox="0 0 10 7"><path d="M.8 1L5 5.400 9.200 1" stroke="#ececec" stroke-width="2" fill="none"></path></svg>
  <div class="abs" style="left:8px;top:490px;width:33px;height:1px;background:#5c5c5c"></div>
  <!-- rotate -->
  <svg style="left:16px;top:503px" width="17" height="16" viewBox="0 0 17 16"><path d="M14.200 10.200A6.400 6.400 0 1 1 12.600 3.400" stroke="#dadada" stroke-width="1.600" fill="none"></path><path d="M16.200 .6v5.600h-5.600z" fill="#dadada"></path></svg>
  <!-- 1:1 -->
  <svg style="left:17px;top:537px" width="20" height="21" viewBox="0 0 20 21"><path d="M2.800 .8h6.800l4.200 4.200v10a1.400 1.400 0 0 1-1.400 1.400H2.800a1.400 1.400 0 0 1-1.400-1.400V2.200A1.400 1.400 0 0 1 2.800 .8z" stroke="#dadada" stroke-width="1.500" fill="none" stroke-linejoin="round"></path><path d="M9.300 1v4.200h4.200" stroke="#dadada" stroke-width="1.200" fill="none"></path><text x="7.600" y="13.400" text-anchor="middle" font-family="Liberation Sans,sans-serif" font-weight="bold" font-size="7.200" fill="#dadada">1:1</text><path d="M19 16v5h-5z" fill="#d0d0d0"></path></svg>
  <!-- zoom in -->
  <svg style="left:17px;top:575px" width="17" height="16" viewBox="0 0 17 16"><circle cx="6.600" cy="6.400" r="5.400" stroke="#dadada" stroke-width="1.600" fill="none"></circle><path d="M10.600 10.400l5 5" stroke="#dadada" stroke-width="1.800" stroke-linecap="round"></path><path d="M6.600 3.600v5.600M3.800 6.400h5.600" stroke="#dadada" stroke-width="1.600"></path></svg>
  <!-- zoom out -->
  <svg style="left:17px;top:611px" width="17" height="16" viewBox="0 0 17 16"><circle cx="6.600" cy="6.400" r="5.400" stroke="#dadada" stroke-width="1.600" fill="none"></circle><path d="M10.600 10.400l5 5" stroke="#dadada" stroke-width="1.800" stroke-linecap="round"></path><path d="M3.800 6.400h5.600" stroke="#dadada" stroke-width="1.600"></path></svg>
</div>
<div id="taskbar">
<svg style="left:18px;top:17px" width="27" height="19" viewBox="0 0 27 19"><defs><linearGradient id="cl" x1="0" y1="0" x2="0" y2="1"><stop offset="0" stop-color="#8fb4ee"></stop><stop offset="0.55" stop-color="#cfe0f8"></stop><stop offset="1" stop-color="#7da6e6"></stop></linearGradient></defs><circle cx="19.500" cy="5" r="4.500" fill="#f29a2e"></circle><path d="M6 17.500a5 5 0 0 1-.6-9.960A7 7 0 0 1 18.600 6.200a5.700 5.700 0 0 1 1.800 11.300z" fill="url(#cl)"></path></svg>
<div class="abs" style="left:30px;top:6px;width:16px;height:16px;border-radius:8px;background:#f799a8"></div>
<div class="t" style="left:30px;top:8.6px;width:16px;text-align:center;font-size:11px;color:#1a1a1a">1</div>
<div class="t" style="left: 50.6px; top: 10.68px; font-size: 11.6px; color: rgb(255, 255, 255); transform: scaleX(0.9419); transform-origin: 0px 0px;">23°C</div>
<div class="t" style="left: 50.6px; top: 25.94px; font-size: 12px; color: rgb(214, 209, 206); transform: scaleX(1.0246); transform-origin: 0px 0px;">Mayorm. nublado</div>
<svg style="left:296px;top:13px" width="23.400" height="23.400" viewBox="0 0 24 24"><defs><linearGradient id="wl" x1="0" y1="0" x2="1" y2="1"><stop offset="0" stop-color="#6fd6fc"></stop><stop offset="1" stop-color="#1592e6"></stop></linearGradient></defs><path d="M0 0h11.400v11.400H0zM12.600 0H24v11.400H12.600zM0 12.600h11.400V24H0zM12.600 12.600H24V24H12.600z" fill="url(#wl)"></path></svg>
<div class="abs" style="left:332px;top:8px;width:220.400px;height:32px;border-radius:16px;background:#4b3f38;border:1px solid #5d514a"></div>
<svg style="left:343.500px;top:17.4px" width="15" height="15" viewBox="0 0 15 15"><circle cx="6.200" cy="6.200" r="5" stroke="#dad5d2" stroke-width="1.600" fill="none"></circle><path d="M10 10l4.200 4.200" stroke="#dad5d2" stroke-width="1.800" stroke-linecap="round"></path></svg>
<div class="t" style="left: 369px; top: 16.95px; font-size: 14px; color: rgb(210, 205, 202); transform: scaleX(0.9546); transform-origin: 0px 0px;">Búsqueda</div>
<svg style="left:501px;top:13.5px" width="49" height="25" viewBox="0 0 49 25"><path d="M1 19c4-6 14-8 24-7 8 1 14 0 22-2 1 6-6 12-20 13C14 24 3 24 1 19z" fill="#d9b38a"></path><path d="M1.500 18.500c3-5.500 12-7.500 21-6.800 6 .5 10 .3 14-.7-2 5-8 8.500-17 9.500-9 1-16 .5-18-2z" fill="#17a9b8"></path><path d="M5 17c5-3 13-3.500 22-3" stroke="#bdeef0" stroke-width="1.400" fill="none"></path><path d="M33 10.500c2-3.500 9-4.500 14-2.500l-1 3c-5 1.500-10 1.500-13-.5z" fill="#3c8c3a"></path><path d="M39 8V3M39 3l-3 1.500M39 3l3 1M39 3l-1.500-2" stroke="#3c8c3a" stroke-width="1.200" fill="none"></path><path d="M3 4.500h9M13 7h11" stroke="#c9c4c6" stroke-width="2.200" stroke-linecap="round"></path></svg>
<svg style="left:564px;top:13px" width="24" height="22" viewBox="0 0 24 22"><defs><linearGradient id="tv" x1="0" y1="0" x2="1" y2="1"><stop offset="0" stop-color="#ffffff"></stop><stop offset="1" stop-color="#c9c9c9"></stop></linearGradient></defs><rect x="0" y="6" width="17" height="16" rx="2" fill="#6a6a6a"></rect><rect x="6" y="0" width="18" height="16" rx="2" fill="url(#tv)"></rect><rect x="6" y="6" width="11" height="10" fill="#a5a5a5" opacity=".55"></rect></svg>
<svg style="left:608px;top:12.6px" width="24" height="24" viewBox="0 0 24 24"><defs><linearGradient id="ch" x1="0" y1="0" x2="1" y2="1"><stop offset="0" stop-color="#9a8cf0"></stop><stop offset="1" stop-color="#6f63d6"></stop></linearGradient></defs><path d="M12 .5a11.300 11.300 0 1 1-5.800 21L1 23l1.300-4.800A11.300 11.300 0 0 1 12 .5z" fill="url(#ch)"></path><rect x="5.600" y="7.600" width="9.200" height="8.400" rx="1.800" fill="#fff"></rect><path d="M15.600 10.600l3.400-2.200v7.200l-3.400-2.200z" fill="#fff"></path></svg>
<svg style="left:651.400px;top:13px" width="25" height="22" viewBox="0 0 25 22"><path d="M0 2a1.500 1.500 0 0 1 1.500-1.500h6.300l2.400 2.400H0z" fill="#e9a01c"></path><rect x="0" y="2.600" width="25" height="19" rx="1.600" fill="#ffd152"></rect><path d="M0 5.200h25" stroke="#f5bd32" stroke-width="1.400"></path><path d="M5.200 21.600v-4.400a2 2 0 0 1 2-2h10.600a2 2 0 0 1 2 2v4.400z" fill="#1b8fe4"></path><rect x="8.600" y="17.400" width="7.800" height="1.800" rx=".9" fill="#0f6fc0"></rect></svg>
<div class="abs" style="left:661.400px;top:40.4px;width:5.600px;height:2.600px;border-radius:1.300px;background:#8d8986"></div>
<svg style="left:696px;top:13px" width="24" height="22" viewBox="0 0 24 22"><rect x="6" y="0" width="18" height="22" rx="1.400" fill="#185c37"></rect><rect x="6" y="0" width="9" height="5.500" fill="#21a366"></rect><rect x="15" y="0" width="9" height="5.500" fill="#33c481"></rect><rect x="6" y="5.500" width="9" height="5.500" fill="#107c41"></rect><rect x="15" y="5.500" width="9" height="5.500" fill="#21a366"></rect><rect x="15" y="11" width="9" height="5.500" fill="#107c41"></rect><rect x="0" y="4.600" width="13" height="13" rx="1.200" fill="#107c41"></rect><text x="6.500" y="15" text-anchor="middle" font-family="Liberation Sans,sans-serif" font-weight="bold" font-size="10.500" fill="#fff">X</text></svg>
<svg style="left:740px;top:12px" width="24.600" height="24.600" viewBox="0 0 24 24"><defs><linearGradient id="ed1" x1="0" y1="0" x2="1" y2="1"><stop offset="0" stop-color="#35c1f1"></stop><stop offset="1" stop-color="#0c59a4"></stop></linearGradient><linearGradient id="ed2" x1="0" y1="0" x2="1" y2="0"><stop offset="0" stop-color="#36c5f0"></stop><stop offset="1" stop-color="#6fdc5a"></stop></linearGradient></defs><circle cx="12" cy="12" r="11.600" fill="url(#ed1)"></circle><path d="M.6 10.500C1.600 4.500 6.500 .4 12 .4c6.600 0 11.600 4.600 11.600 9.600 0 3.400-2.600 5.400-5.400 5.400-2.400 0-3.600-1-3.600-2 0-.8.800-1.200.8-2.600 0-2.400-2.400-4.400-5.400-4.400C5.500 6.400 1.800 8 .6 10.500z" fill="url(#ed2)"></path><path d="M9.600 13.400c0 4.200 3.400 7.400 7 7.400 1.600 0 3.200-.4 4.600-1.400-2 2.800-5.400 4.400-9 4.200C6.400 23.200 3 18.600 3.600 14c.4-3 3-5.400 6.400-5.400 1.400 0 2.800.6 3.400 1.400-2.200-.6-3.800.8-3.800 3.400z" fill="#0e4f97"></path></svg>
<svg style="left:784px;top:12.2px" width="24" height="23.600" viewBox="0 0 24 24"><rect width="24" height="24" fill="#e8471d"></rect><path d="M5.500 7.500L10.800 3l1.800 11.500-2.600 6.300-5.500-2.300z" fill="#fff"></path><path d="M13.400 4.600l5.400-1.200 1.200 14.200-6.400 3.200 1.800-7z" fill="#fff"></path><path d="M10.500 9.500l3.200 2.700-2.800 1.600z" fill="#e8471d"></path></svg>
<svg style="left:828px;top:13px" width="24" height="22" viewBox="0 0 24 22"><rect x="6" y="0" width="18" height="22" rx="1.400" fill="#103f91"></rect><rect x="6" y="0" width="18" height="5.500" fill="#41a5ee"></rect><rect x="6" y="5.500" width="18" height="5.500" fill="#2b7cd3"></rect><rect x="6" y="11" width="18" height="5.500" fill="#185abd"></rect><rect x="0" y="4.600" width="13" height="13" rx="1.200" fill="#185abd"></rect><text x="6.500" y="14.800" text-anchor="middle" font-family="Liberation Sans,sans-serif" font-weight="bold" font-size="10" fill="#fff">W</text></svg>
<svg style="left:872px;top:11.4px" width="24" height="24" viewBox="0 0 24 24"><defs><radialGradient id="ff" cx=".7" cy=".15" r="1"><stop offset="0" stop-color="#fff36a"></stop><stop offset=".35" stop-color="#ff9a1f"></stop><stop offset=".75" stop-color="#ff3b4e"></stop><stop offset="1" stop-color="#d22ba0"></stop></radialGradient></defs><path d="M12 2.600c1.800-.2 3-1.200 3.600-2.400 2 1.600 2.800 3.400 3 5 2.600 1.800 4.800 5 4.800 8.400A11.400 11.400 0 0 1 .6 13.800c0-3.600 1.200-6.400 3-8 .2 1 .6 1.800 1.200 2.400C5.600 5.400 8.400 2.800 12 2.600z" fill="url(#ff)"></path><circle cx="12.400" cy="13" r="5.600" fill="#6b35c8"></circle><path d="M7 11c1.600-1.800 4-1.600 5.400-.4 1.400 1.200 3.200.8 4.400.2-.2 3.600-2.600 6-5.600 6-2.800 0-4.800-2.400-4.200-5.800z" fill="#9059ff"></path><path d="M6.200 9.600c2-.6 4 0 5.200 1.400-2.400.2-3.200 1.600-2.800 3-1.800-.6-2.800-2.400-2.400-4.400z" fill="#ffbd2f"></path></svg>
<svg style="left:916px;top:12.2px" width="24" height="24" viewBox="0 0 24 24"><circle cx="12" cy="12" r="11.800" fill="#fbc116"></circle><path d="M12 12L1.800 6.100A11.800 11.800 0 0 1 22.200 6.100z" fill="#e33b2e"></path><path d="M12 12L1.800 6.100A11.800 11.800 0 0 0 12 23.800l5.100-8.850z" fill="#1fa463"></path><path d="M12 6.100h10.200A11.800 11.800 0 0 1 12 23.800l5.100-8.850z" fill="#fbc116"></path><path d="M12 6.100H22.200" stroke="#e33b2e" stroke-width=".1"></path><circle cx="12" cy="12" r="5.600" fill="#fff"></circle><circle cx="12" cy="12" r="4.400" fill="#4285f4"></circle></svg>
<svg style="left:960px;top:12px" width="24.400" height="24.400" viewBox="0 0 24 24"><circle cx="12" cy="12" r="12" fill="#1ed760"></circle><path d="M5.400 8.600c4.400-1.400 9.400-1 13.400 1.200" stroke="#10160f" stroke-width="2.200" fill="none" stroke-linecap="round"></path><path d="M6.200 12.400c3.800-1.100 7.800-.7 11.200 1.100" stroke="#10160f" stroke-width="1.900" fill="none" stroke-linecap="round"></path><path d="M7 15.900c3.200-.9 6.400-.6 9.200.9" stroke="#10160f" stroke-width="1.600" fill="none" stroke-linecap="round"></path></svg>
<div class="abs" style="left:968.600px;top:40.4px;width:6.400px;height:2.600px;border-radius:1.300px;background:#8d8986"></div>
<svg style="left:1006.600px;top:11.6px" width="19" height="25" viewBox="0 0 19 25"><defs><clipPath id="dp"><path d="M10.800 0c1.200 3.600 8.200 8.600 8.200 15.400a9.500 9.500 0 0 1-19 0C0 9.800 5.200 6.600 8.200 1.400 9 .4 10 0 10.800 0z"></path></clipPath></defs><g clip-path="url(#dp)"><rect width="19" height="25" fill="#2f8fe8"></rect><path d="M-2 19c5-1 9-5 12-10s8-5 11-3V-1H-2z" fill="#e84a9a"></path><path d="M-2 12c4 0 7-3 9-7s6-5 9-4V-2H-2z" fill="#8c5be0"></path><path d="M5 3c2-3 6-4 9-3l2 4c-3-1-6 0-8 3z" fill="#f6c02a"></path><path d="M-2 25c6-.5 12-3 15-8s6-5 8-4v13H-2z" fill="#36b7f0"></path></g></svg>
<div class="abs" style="left:1012.800px;top:40.4px;width:6.400px;height:2.600px;border-radius:1.300px;background:#8d8986"></div>
<div class="abs" style="left:1040.400px;top:4.2px;width:39.400px;height:40px;border-radius:4px;background:#3a2f2a;border:1px solid #453a35"></div>
<svg style="left:1049.300px;top:12.8px" width="21.200" height="21.200" viewBox="0 0 22 22"><rect width="22" height="22" rx="4" fill="#b30b00"></rect><path d="M10.800 4.200c.9 0 1.200 1.200.9 2.800-.2 1.200-.5 2.300-.9 3.400.8 1.400 1.900 2.600 3.100 3.300 1.500-.2 3.500 0 3.600 1 .1 1.100-1.800 1.200-3.800 0-1.500.3-3 .8-4.300 1.400-1.200 2-2.600 3.100-3.400 2.600-.9-.6.300-2.200 2.500-3.200.7-1.300 1.300-2.700 1.700-4.100-.7-1.600-.9-3.400-.5-4.300.2-.5.6-.9 1.100-.9z" stroke="#fff" stroke-width="1.300" fill="none" stroke-linejoin="round"></path></svg>
<div class="abs" style="left:1052px;top:39.8px;width:16px;height:3px;border-radius:1.500px;background:#4cc2ff"></div>
<svg style="left:1144.800px;top:20.4px" width="11.200" height="6.800" viewBox="0 0 11.200 6.800"><path d="M.7 6.200L5.600 1.100l4.900 5.100" stroke="#fff" stroke-width="1.400" fill="none" stroke-linecap="round" stroke-linejoin="round"></path></svg>
<div class="t" style="left: 1178.4px; top: 12.5px; font-size: 10.4px; color: rgb(255, 255, 255); transform: scaleX(0.904); transform-origin: 0px 0px;">ESP</div>
<div class="t" style="left: 1177.6px; top: 28.6px; font-size: 10.4px; color: rgb(255, 255, 255); transform: scaleX(1.0845); transform-origin: 0px 0px;">LAA</div>
<svg style="left:1218px;top:15.8px" width="17" height="17" viewBox="0 0 17 17"><path d="M9.500 1.600H1.400A.7.700 0 0 0 .7 2.300v8.200a.7.700 0 0 0 .7.700h8.600" stroke="#fff" stroke-width="1.200" fill="none"></path><path d="M3 15.800h8M5 11.400v4.200M8.600 11.400v4.200" stroke="#fff" stroke-width="1.200"></path><rect x="11.600" y=".6" width="3.600" height="6" rx="1.200" stroke="#fff" stroke-width="1.100" fill="none"></rect><path d="M13.400 6.800v9.400M12 2.600h2.800" stroke="#fff" stroke-width="1.100"></path></svg>
<svg style="left:1242px;top:17px" width="17" height="14" viewBox="0 0 17 14"><path d="M.7 4.600h2.600L6.700 1.400v11.200L3.300 9.400H.7z" stroke="#fff" stroke-width="1.200" fill="none" stroke-linejoin="round"></path><path d="M9 4.600a3.400 3.400 0 0 1 0 4.800" stroke="#fff" stroke-width="1.100" fill="none" stroke-linecap="round"></path><path d="M11 2.600a6.200 6.200 0 0 1 0 8.800" stroke="#8d8784" stroke-width="1.100" fill="none" stroke-linecap="round"></path><path d="M13 .8a8.800 8.800 0 0 1 0 12.400" stroke="#6b6562" stroke-width="1.100" fill="none" stroke-linecap="round"></path></svg>
<div class="t" style="left: 1294.6px; top: 11.05px; font-size: 11.4px; color: rgb(255, 255, 255); transform: scaleX(0.9819); transform-origin: 0px 0px;">16:51</div>
<div class="t" style="left: 1274.5px; top: 27.05px; font-size: 11.4px; color: rgb(255, 255, 255); transform: scaleX(1.0847); transform-origin: 0px 0px;">5/4/2024</div>
<svg style="left:1331px;top:16.4px" width="14" height="16" viewBox="0 0 14 16"><path d="M7 .4c3 0 4.800 2.200 4.800 5v3.600l1.800 3.200H.4l1.800-3.200V5.400C2.200 2.600 4 .4 7 .4z" fill="#8fe1fc"></path><path d="M4.800 13.400a2.200 2.200 0 0 0 4.400 0z" fill="#8fe1fc"></path></svg>
</div>


</body></html>
